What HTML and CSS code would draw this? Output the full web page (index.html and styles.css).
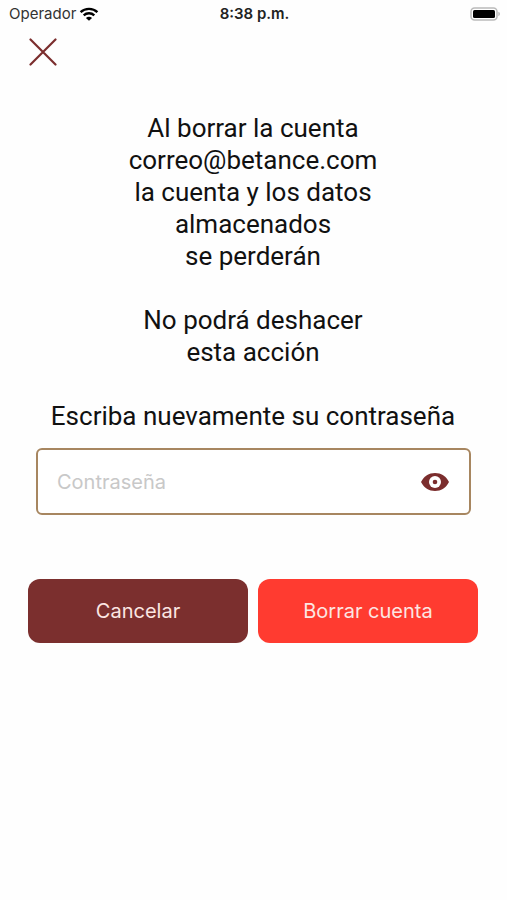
FILE: index.html
```html
<!DOCTYPE html>
<html lang="es">
<head>
<meta charset="utf-8">
<meta name="viewport" content="width=device-width, initial-scale=1">
<title>Borrar cuenta</title>
<link rel="stylesheet" href="styles.css">
</head>
<body>
<header class="status">
  <div class="carrier">
    <span>Operador</span>
    <svg class="wifi" viewBox="0 0 20 14" aria-hidden="true">
      <path d="M1.600 5.200C6.200.8 13.800.8 18.400 5.200M4.700 8.300c3-2.700 7.600-2.700 10.600 0"/>
      <path class="dot" d="M10 13.800 6.900 10.900q3.100-2.300 6.200 0z"/>
    </svg>
  </div>
  <span class="clock">8:38 p.m.</span>
  <svg class="battery" viewBox="0 0 30 14" aria-hidden="true">
    <rect class="shell" x="1" y="1" width="26" height="12" rx="3.5"/>
    <rect x="3" y="3" width="22" height="8" rx="1.5"/>
    <path class="cap" d="M28.300 4.800q1.700.6 1.700 2.200t-1.700 2.200z"/>
  </svg>
</header>
<main class="screen">
  <button class="close" type="button" aria-label="Cerrar">
    <svg viewBox="0 0 28 28" aria-hidden="true"><path d="M1.500 1.500 26.500 26.500M26.500 1.500 1.500 26.500"/></svg>
  </button>
  <form class="form">
    <div class="message">
      <p>Al borrar la cuenta<br>correo@betance.com<br>la cuenta y los datos<br>almacenados<br>se perderán</p>
      <p>No podrá deshacer<br>esta acción</p>
      <label for="password">Escriba nuevamente su contraseña</label>
    </div>
    <div class="field">
      <input id="password" type="password" placeholder="Contraseña">
      <button class="reveal" type="button" aria-label="Mostrar contraseña">
        <svg viewBox="0 0 28 18" aria-hidden="true">
          <path d="M0 9C3 3 8 0 14 0s11 3 14 9c-3 6-8 9-14 9S3 15 0 9z"/>
          <circle class="ring" cx="14" cy="9" r="6"/>
          <circle cx="14" cy="9" r="2.300"/>
        </svg>
      </button>
    </div>
    <div class="actions">
      <button class="cancel" type="button">Cancelar</button>
      <button class="delete" type="submit">Borrar cuenta</button>
    </div>
  </form>
</main>
</body>
</html>
```
FILE: styles.css
```css
* {
  box-sizing: border-box;
}

body {
  margin: 0;
  background: #fefefe;
  color: #111;
  font-family: Inter, "Liberation Sans", sans-serif;
}

button,
input {
  font: inherit;
}

button {
  border: 0;
  padding: 0;
  background: none;
  cursor: pointer;
}

svg {
  display: block;
}

.status {
  display: grid;
  grid-template-columns: 1fr auto 1fr;
  align-items: center;
  height: 27px;
  padding: 0 7px 0 9px;
  font-size: 15px;
  line-height: 18px;
  color: #333;
}

.carrier {
  display: flex;
  align-items: center;
  gap: 3px;
}

.wifi {
  width: 20px;
  height: 14px;
  fill: none;
  stroke: #000;
  stroke-width: 2.4;
}

.wifi .dot {
  fill: #000;
  stroke: none;
}

.clock {
  font-weight: 600;
  color: #222;
}

.battery {
  justify-self: end;
  width: 30px;
  height: 14px;
}

.battery .shell {
  fill: #fff;
  stroke: #bbb;
  stroke-width: 1.5;
}

.battery .cap {
  fill: #bbb;
}

.screen {
  padding: 11px 29px 40px 28px;
}

.close {
  display: block;
  width: 28px;
  height: 28px;
}

.close svg {
  width: 28px;
  height: 28px;
  margin: 0 1px;
  fill: none;
  stroke: #7b2d2d;
  stroke-width: 2.2;
  stroke-linecap: round;
}

.message {
  margin-top: 46px;
  font-family: Roboto, "Liberation Sans", sans-serif;
  font-size: 26px;
  line-height: 32px;
  text-align: center;
}

.message p {
  margin: 0 0 32px;
}

.field {
  display: flex;
  align-items: center;
  height: 67px;
  margin: 16px 7px 64px 8px;
  padding: 0 20px 0 19px;
  border: 2px solid #a78660;
  border-radius: 6px;
  background: #fff;
}

.field:focus-within {
  border-color: #7b2d2d;
}

.field input {
  flex: 1;
  min-width: 0;
  padding: 0;
  border: 0;
  outline: 0;
  background: none;
  color: #111;
  font-size: 20px;
}

.field input::placeholder {
  color: #c8c8c8;
  opacity: 1;
}

.reveal svg {
  width: 28px;
  height: 18px;
  fill: #7b2d2d;
}

.reveal .ring {
  fill: #fff;
}

.actions {
  display: grid;
  grid-template-columns: 1fr 1fr;
  gap: 10px;
}

.actions button {
  height: 64px;
  border-radius: 12px;
  color: #fce6e2;
  font-size: 20px;
}

.actions .cancel {
  background: #7b2f2e;
}

.actions .delete {
  background: #ff3b30;
}
```
